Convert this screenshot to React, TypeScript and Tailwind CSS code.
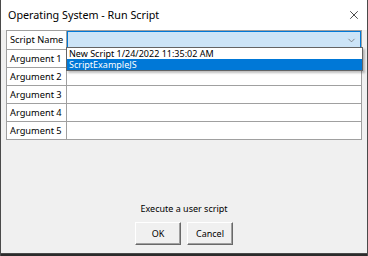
import { ChevronDown, X } from "lucide-react";

const args = ["Argument 1", "Argument 2", "Argument 3", "Argument 4", "Argument 5"];

export default function App() {
  return (
    <div
      className="relative flex h-[256px] w-[368px] flex-col overflow-hidden whitespace-nowrap border-x border-[#4a4a4a] bg-[#f0f0f0] text-[9px] text-black"
      style={{ fontFamily: '"Noto Sans", "Liberation Sans", sans-serif' }}
    >
      {/* title bar */}
      <div className="flex h-[30px] shrink-0 items-center justify-between bg-white pl-[7px] pr-[6px]">
        <span className="text-[10.75px] leading-none">Operating System - Run Script</span>
        <X className="h-[14px] w-[14px]" strokeWidth={1.2} />
      </div>

      {/* argument grid */}
      <div className="mx-[5px] grid grid-cols-[60px_1fr] border border-[#a0a0a0] bg-white">
        <div className="flex h-[18px] items-center border-r border-[#a0a0a0] pl-[3px] text-[9.25px]">Script Name</div>
        <div className="flex h-[18px] items-center justify-end border border-[#0078d7] bg-[#cce4f7] pr-[3px]">
          <ChevronDown className="h-[11px] w-[11px] text-[#606060]" strokeWidth={1.5} />
        </div>
        {args.map((a) => (
          <div key={a} className="contents">
            <div className="flex h-[18px] items-center border-r border-t border-[#a0a0a0] pl-[3px] text-[9.25px]">{a}</div>
            <div className="h-[18px] border-t border-[#a0a0a0]" />
          </div>
        ))}
      </div>

      {/* dropdown list over the grid */}
      <div className="absolute left-[65px] top-[47px] w-[297px] border border-[#646464] bg-white shadow-[2px_2px_2px_rgba(0,0,0,0.25)]">
        <div className="h-[11px] pl-[2px] leading-[11px]">New Script 1/24/2022 11:35:02 AM</div>
        <div className="h-[11px] bg-[#0078d7] pl-[2px] leading-[11px] text-white">ScriptExampleJS</div>
      </div>

      <div className="flex flex-1 flex-col items-center justify-end pb-[8px]">
        <div className="mb-[9px] leading-none">Execute a user script</div>
        <div className="flex gap-[6px]">
          <button className="h-[23px] w-[46px] border border-b-[#696969] border-l-white border-r-[#696969] border-t-white bg-[#f0f0f0] leading-none shadow-[inset_-1px_-1px_0_#a0a0a0]">
            OK
          </button>
          <button className="h-[23px] w-[46px] border border-b-[#696969] border-l-white border-r-[#696969] border-t-white bg-[#f0f0f0] leading-none shadow-[inset_-1px_-1px_0_#a0a0a0]">
            Cancel
          </button>
        </div>
      </div>
      <div className="h-[3px] shrink-0 border-t border-[#4a4a4a] bg-[#2b2b2b]" />
    </div>
  );
}
